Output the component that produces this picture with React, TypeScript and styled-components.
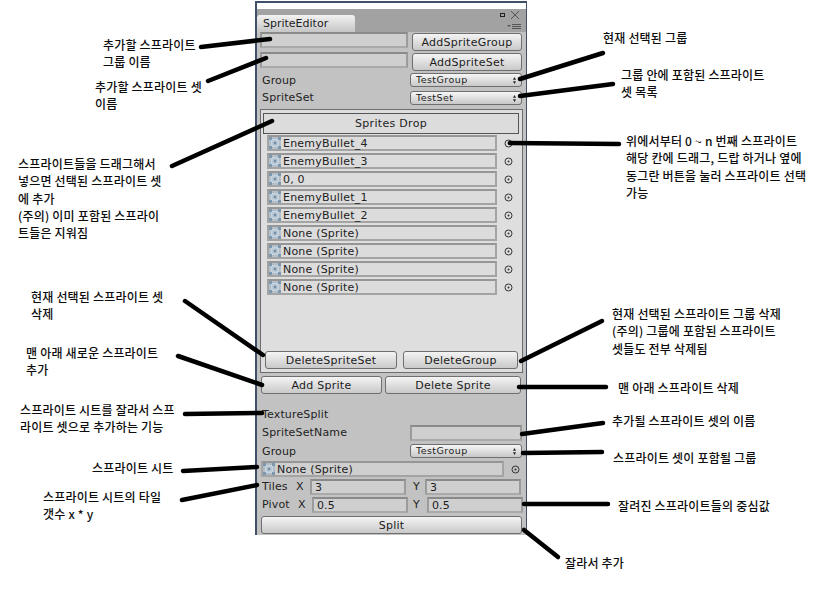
import React from "react";
import styled, { createGlobalStyle } from "styled-components";

const Global = createGlobalStyle`
  html, body { margin: 0; padding: 0; background: #fff; }
  #root { width: 828px; height: 603px; }
`;

const Canvas = styled.div`
  position: relative;
  width: 828px;
  height: 603px;
  background: #fff;
  overflow: hidden;
`;

const Note = styled.div<{ $x: number; $y: number }>`
  position: absolute;
  left: ${(p) => p.$x}px;
  top: ${(p) => p.$y}px;
  font: 500 12px/17.3px "Noto Sans CJK KR", "Noto Sans", sans-serif;
  letter-spacing: 0.2px;
  color: #0c0c0c;
  white-space: pre;
`;

const Wires = styled.svg`
  position: absolute;
  inset: 0;
  width: 828px;
  height: 603px;
  pointer-events: none;
`;

const Frame = styled.div`
  position: absolute;
  left: 255px;
  top: 1px;
  width: 272px;
  height: 534px;
  box-sizing: border-box;
  border: 2px solid #3f5068;
  border-bottom: 0;
  border-right-width: 1px;
  background: #fff;
  display: flex;
  flex-direction: column;
  padding-top: 6px;
  font: 11px/14px "DejaVu Sans", sans-serif;
  color: #1c1c1c;
`;

const TitleBar = styled.div`
  position: relative;
  flex: 0 0 23px;
  background: #a2a2a2;
  display: flex;
  align-items: flex-end;
`;

const Tab = styled.div`
  width: 98px;
  height: 17px;
  box-sizing: border-box;
  padding: 2px 0 0 6px;
  background: linear-gradient(#f2f2f2, #c6c6c6);
  border-radius: 3px 3px 0 0;
  font-size: 11px;
  line-height: 14px;
`;

const TitleIcons = styled.svg`
  position: absolute;
  right: 3px;
  top: 0;
  width: 26px;
  height: 23px;
`;

const Body = styled.div`
  flex: 1;
  background: #c2c2c2;
  display: flex;
  flex-direction: column;
  padding: 0 4px 0 3px;
  min-height: 0;
`;

const Row = styled.div<{ $h: number; $top?: number }>`
  display: flex;
  align-items: flex-start;
  height: ${(p) => p.$h}px;
  margin-top: ${(p) => p.$top ?? 0}px;
  flex: none;
`;

const Field = styled.div<{ $w: number; $ml?: number; $end?: boolean }>`
  flex: none;
  width: ${(p) => p.$w}px;
  height: 16px;
  margin-left: ${(p) => (p.$end ? "auto" : `${p.$ml ?? 0}px`)};
  box-sizing: border-box;
  background: #cfcfcf;
  border: 2px solid #9b9b9b;
  border-top-color: #8a8a8a;
  border-bottom-color: #a9a9a9;
  padding-left: 3px;
  font-size: 11px;
  line-height: 13px;
  letter-spacing: 0.1px;
`;

const Button = styled.div<{ $w: number; $ml?: number; $mt?: number }>`
  flex: none;
  width: ${(p) => p.$w}px;
  height: 18px;
  margin-left: ${(p) => p.$ml ?? 0}px;
  margin-top: ${(p) => p.$mt ?? 0}px;
  box-sizing: border-box;
  border: 1px solid #6f6f6f;
  border-radius: 3px;
  background: linear-gradient(#f4f4f4, #c9c9c9);
  display: flex;
  align-items: center;
  justify-content: center;
  padding-top: 1px;
  font-size: 11px;
  letter-spacing: 0.25px;
`;

const Popup = styled.div`
  flex: none;
  width: 112px;
  height: 14px;
  margin-left: auto;
  box-sizing: border-box;
  border: 1px solid #6f6f6f;
  border-radius: 3px;
  background: linear-gradient(#f6f6f6, #c8c8c8);
  padding-left: 5px;
  font-size: 9.5px;
  line-height: 12px;
  letter-spacing: 0.45px;
  position: relative;
  &::after {
    content: "";
    position: absolute;
    right: 5px;
    top: 3px;
    width: 3px;
    height: 7px;
    background: #222;
    clip-path: polygon(50% 0, 100% 40%, 0 40%, 0 60%, 100% 60%, 50% 100%, 0 60%, 0 40%);
  }
`;

const Label = styled.div<{ $w?: number; $mt?: number; $ml?: number }>`
  flex: none;
  width: ${(p) => (p.$w ? p.$w + "px" : "auto")};
  margin-top: ${(p) => p.$mt ?? 0}px;
  margin-left: ${(p) => p.$ml ?? 0}px;
  font-size: 11px;
  line-height: 14px;
  letter-spacing: 0.15px;
  color: #222;
`;

const Box = styled.div`
  flex: none;
  height: 264px;
  margin-top: 3px;
  width: 263px;
  box-sizing: border-box;
  border: 1px solid #6d6d6d;
  background: #dedede;
  padding: 3px 3px 0 2px;
  display: flex;
  flex-direction: column;
`;

const Drop = styled.div`
  flex: none;
  height: 21px;
  box-sizing: border-box;
  border: 1px solid #555;
  background: #dcdcdc;
  display: flex;
  align-items: center;
  justify-content: center;
  font-size: 11px;
  letter-spacing: 0.3px;
`;

const SlotList = styled.div`
  display: flex;
  flex-direction: column;
  gap: 2px;
  margin: 1px 0 0 4px;
  flex: 1;
`;

const SlotRow = styled.div`
  display: flex;
  align-items: center;
  height: 16px;
`;

const Slot = styled.div<{ $w: number; $light?: boolean; $ml?: number }>`
  flex: none;
  width: ${(p) => p.$w}px;
  height: 16px;
  margin-left: ${(p) => p.$ml ?? 0}px;
  box-sizing: border-box;
  border: 2px solid #a4a4a4;
  border-top-color: #969696;
  background: ${(p) => (p.$light ? "#dcdcdc" : "#cfcfcf")};
  display: flex;
  align-items: center;
  gap: 2px;
  font-size: 11px;
  line-height: 13px;
  letter-spacing: 0.2px;
  color: #222;
`;

const SlotText = styled.span`
  padding-top: 1px;
  line-height: 13px;
  white-space: nowrap;
`;

const Picker = styled.svg<{ $ml: number; $mb?: number }>`
  flex: none;
  width: 9px;
  height: 9px;
  margin-left: ${(p) => p.$ml}px;
  margin-bottom: ${(p) => p.$mb ?? 0}px;
  align-self: center;
`;

const BoxFooter = styled.div`
  display: flex;
  gap: 6px;
  margin: 0 0 3px 2px;
`;

const SPRITES = [
  "EnemyBullet_4",
  "EnemyBullet_3",
  "0, 0",
  "EnemyBullet_1",
  "EnemyBullet_2",
  "None (Sprite)",
  "None (Sprite)",
  "None (Sprite)",
  "None (Sprite)",
];

const NOTES: [number, number, string][] = [
  [103, 36, "추가할 스프라이트\n그룹 이름"],
  [95, 78, "추가할 스프라이트 셋\n이름"],
  [18, 155, "스프라이트들을 드래그해서\n넣으면 선택된 스프라이트 셋\n에 추가\n(주의) 이미 포함된 스프라이\n트들은 지워짐"],
  [31, 288, "현재 선택된 스프라이트 셋\n삭제"],
  [26, 344, "맨 아래 새로운 스프라이트\n추가"],
  [20, 401, "스프라이트 시트를 잘라서 스프\n라이트 셋으로 추가하는 기능"],
  [92, 459, "스프라이트 시트"],
  [43, 488, "스프라이트 시트의 타일\n갯수 x * y"],
  [603, 29, "현재 선택된 그룹"],
  [621, 66, "그룹 안에 포함된 스프라이트\n셋 목록"],
  [626, 132, "위에서부터 0 ~ n 번째 스프라이트\n해당 칸에 드래그, 드랍 하거나 옆에\n동그란 버튼을 눌러 스프라이트 선택\n가능"],
  [612, 305, "현재 선택된 스프라이트 그룹 삭제\n(주의) 그룹에 포함된 스프라이트\n셋들도 전부 삭제됨"],
  [618, 379, "맨 아래 스프라이트 삭제"],
  [612, 412, "추가될 스프라이트 셋의 이름"],
  [613, 449, "스프라이트 셋이 포함될 그룹"],
  [618, 497, "잘려진 스프라이트들의 중심값"],
  [565, 554, "잘라서 추가"],
];

const WIRES: [number, number, number, number][] = [
  [201, 47, 270, 39],
  [208, 81, 266, 58],
  [172, 166, 272, 121],
  [603, 53, 520, 79],
  [613, 84, 520, 96],
  [510, 143, 619, 144],
  [185, 301, 263, 355],
  [178, 356, 262, 385],
  [185, 414, 262, 413],
  [183, 471, 257, 467],
  [182, 500, 257, 485],
  [521, 361, 602, 321],
  [519, 387, 606, 387],
  [522, 434, 603, 423],
  [523, 453, 602, 452],
  [524, 504, 608, 504],
  [524, 530, 558, 557],
];

const SpriteIcon = () => (
  <svg width="12" height="12" viewBox="0 0 12 12" style={{ flex: "none" }}>
    <rect x="1" y="1" width="10" height="10" fill="#c9d4dc" stroke="#8ea5b8" />
    <rect x="3.5" y="3.5" width="5" height="5" fill="#aebfcd" />
    <circle cx="6" cy="6" r="1.2" fill="#6b8aa4" />
    <rect x="0" y="0" width="3" height="3" fill="#7d98ad" />
    <rect x="9" y="0" width="3" height="3" fill="#7d98ad" />
    <rect x="0" y="9" width="3" height="3" fill="#7d98ad" />
    <rect x="9" y="9" width="3" height="3" fill="#7d98ad" />
  </svg>
);

const Dot = ({ ml, mb }: { ml: number; mb?: number }) => (
  <Picker $ml={ml} $mb={mb} viewBox="0 0 9 9">
    <circle cx="4.5" cy="4.5" r="3.5" fill="none" stroke="#333" strokeWidth="1" />
    <circle cx="4.5" cy="4.5" r="1" fill="#333" />
  </Picker>
);

export default function App() {
  return (
    <Canvas>
      <Global />
      <Frame>
        <TitleBar>
          <Tab>SpriteEditor</Tab>
          <TitleIcons viewBox="0 0 26 23">
            <rect x="3.5" y="4.5" width="4" height="3" fill="none" stroke="#222" />
            <path d="M14 2 L22 10 M22 2 L14 10" stroke="#555" strokeWidth="1" fill="none" />
            <path d="M10 16 L14 16 L12 18 Z" fill="#555" />
            <path d="M15 15.5 H24 M15 17.5 H24 M15 19.5 H24" stroke="#555" strokeWidth="1" />
          </TitleIcons>
        </TitleBar>
        <Body>
          <Row $h={20}>
            <Field $w={148} />
            <Button $w={110} $ml={4} $mt={1}>AddSpriteGroup</Button>
          </Row>
          <Row $h={20}>
            <Field $w={148} />
            <Button $w={110} $ml={4} $mt={1}>AddSpriteSet</Button>
          </Row>
          <Row $h={18} $top={1}>
            <Label $ml={2} $mt={1}>Group</Label>
            <Popup>TestGroup</Popup>
          </Row>
          <Row $h={15}>
            <Label $ml={2}>SpriteSet</Label>
            <Popup>TestSet</Popup>
          </Row>
          <Box>
            <Drop>Sprites Drop</Drop>
            <SlotList>
              {SPRITES.map((s, i) => (
                <SlotRow key={i}>
                  <Slot $w={230} $light>
                    <SpriteIcon />
                    <SlotText>{s}</SlotText>
                  </Slot>
                  <Dot ml={7} />
                </SlotRow>
              ))}
            </SlotList>
            <BoxFooter>
              <Button $w={132}>DeleteSpriteSet</Button>
              <Button $w={115}>DeleteGroup</Button>
            </BoxFooter>
          </Box>
          <Row $h={18} $top={3}>
            <Button $w={121} $ml={1}>Add Sprite</Button>
            <Button $w={136} $ml={3}>Delete Sprite</Button>
          </Row>
          <Row $h={15} $top={14}>
            <Label $ml={2}>TextureSplit</Label>
          </Row>
          <Row $h={18} $top={2}>
            <Label $ml={2} $mt={1}>SpriteSetName</Label>
            <Field $w={112} $end />
          </Row>
          <Row $h={17} $top={1}>
            <Label $ml={2} $mt={1}>Group</Label>
            <Popup>TestGroup</Popup>
          </Row>
          <Row $h={18}>
            <Slot $w={243} $ml={1}>
              <SpriteIcon />
              <SlotText>None (Sprite)</SlotText>
            </Slot>
            <Dot ml={7} mb={2} />
          </Row>
          <Row $h={18}>
            <Label $w={34} $ml={2} $mt={1}>Tiles</Label>
            <Label $w={14} $mt={1}>X</Label>
            <Field $w={96}>3</Field>
            <Label $w={12} $ml={7} $mt={1}>Y</Label>
            <Field $w={96}>3</Field>
          </Row>
          <Row $h={19}>
            <Label $w={36} $ml={2} $mt={1}>Pivot</Label>
            <Label $w={14} $mt={1}>X</Label>
            <Field $w={96}>0.5</Field>
            <Label $w={14} $ml={5} $mt={1}>Y</Label>
            <Field $w={96}>0.5</Field>
          </Row>
          <Row $h={18}>
            <Button $w={261} $ml={1}>Split</Button>
          </Row>
        </Body>
      </Frame>
      <Wires viewBox="0 0 828 603">
        {WIRES.map(([a, b, c, d], i) => (
          <line key={i} x1={a} y1={b} x2={c} y2={d} stroke="#000" strokeWidth={4.5} strokeLinecap="round" />
        ))}
      </Wires>
      {NOTES.map(([x, y, t], i) => (
        <Note key={i} $x={x} $y={y}>{t}</Note>
      ))}
    </Canvas>
  );
}
